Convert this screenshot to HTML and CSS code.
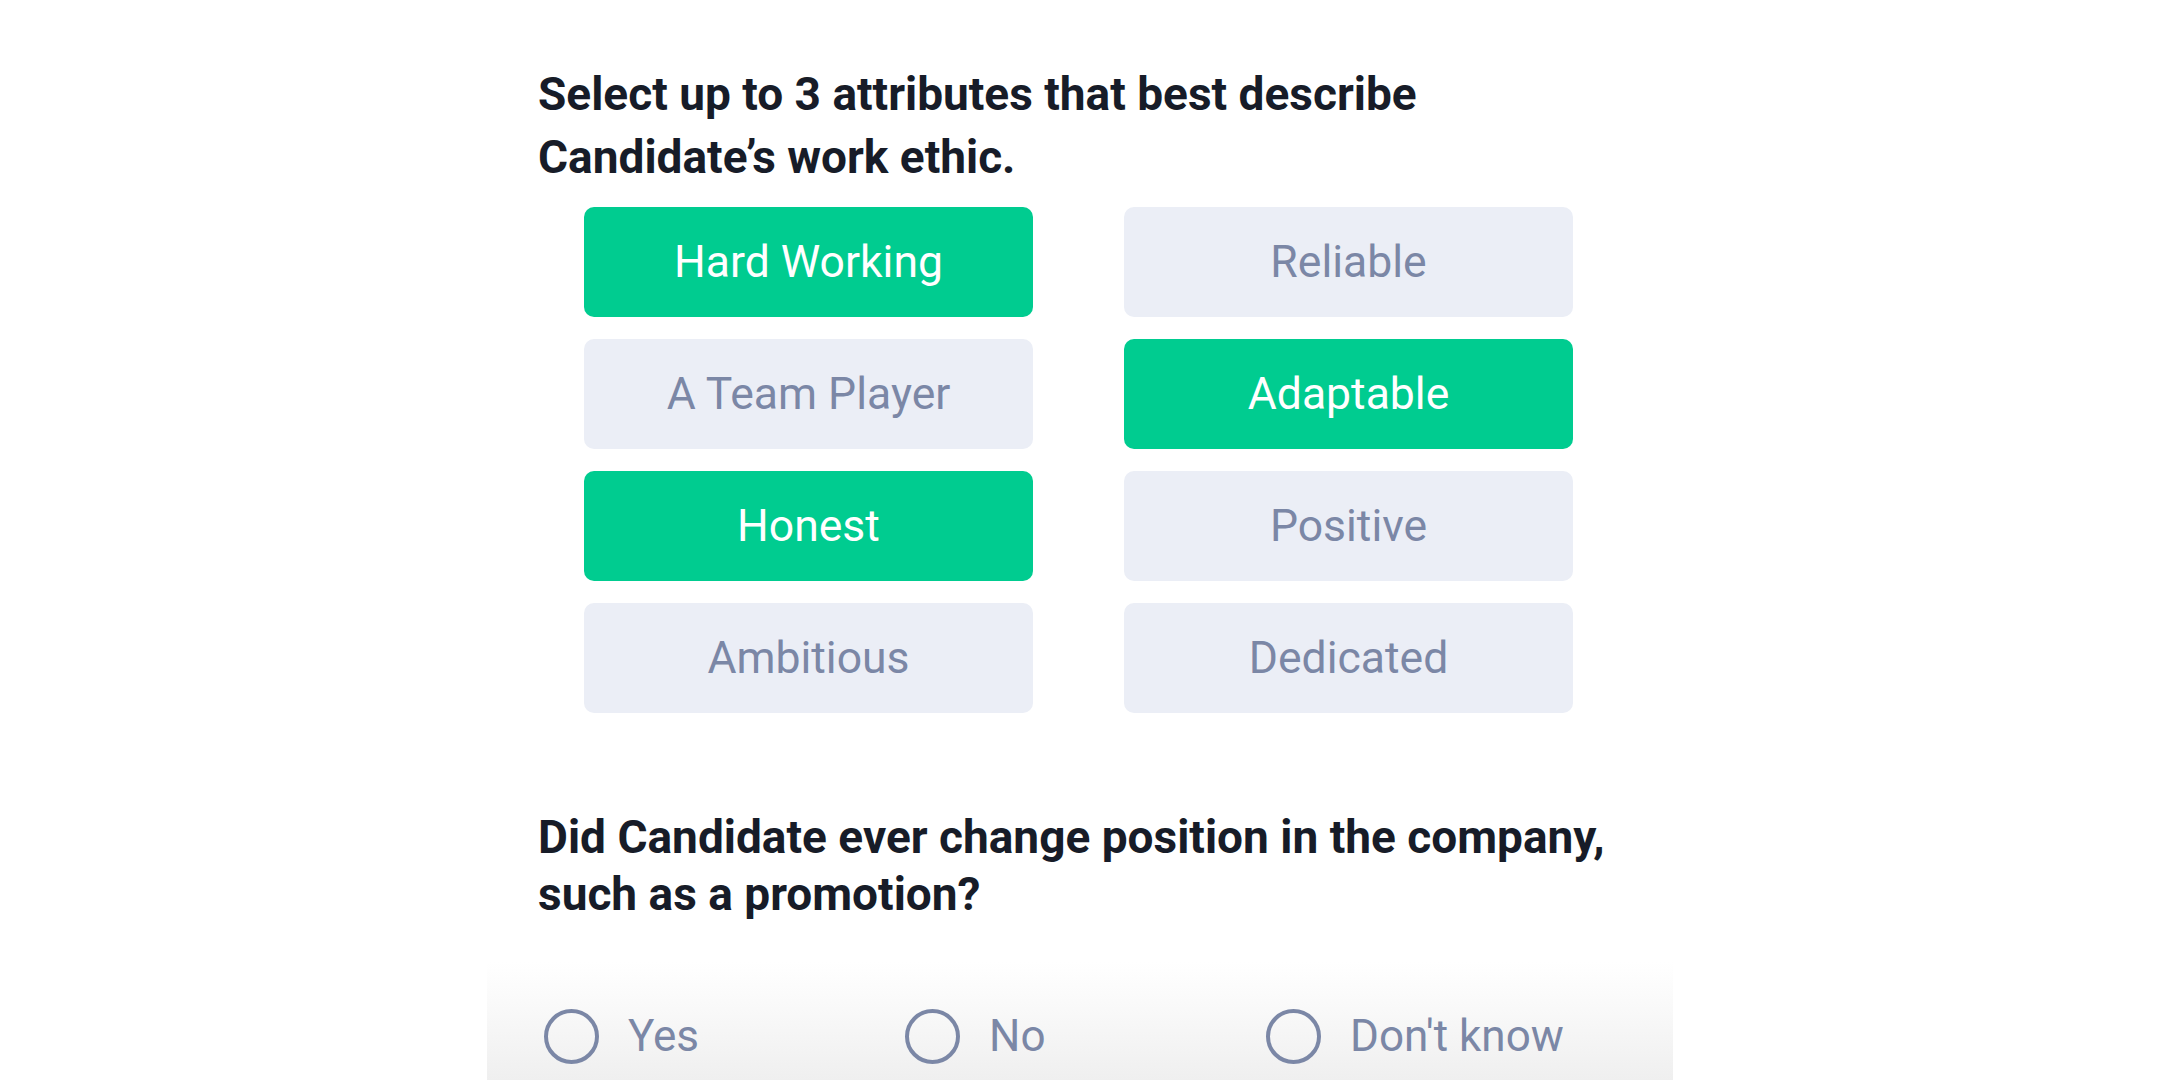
FILE: index.html
```html
<!DOCTYPE html>
<html lang="en">
<head>
<meta charset="utf-8">
<title>Reference questions</title>
<link rel="stylesheet" href="styles.css">
</head>
<body>
<main class="page">
  <section class="question q-attributes">
    <h2 class="q-title">Select up to 3 attributes that best describe<br>Candidate’s work ethic.</h2>
    <div class="choices">
      <button class="choice is-selected">Hard Working</button>
      <button class="choice">Reliable</button>
      <button class="choice">A Team Player</button>
      <button class="choice is-selected">Adaptable</button>
      <button class="choice is-selected">Honest</button>
      <button class="choice">Positive</button>
      <button class="choice">Ambitious</button>
      <button class="choice">Dedicated</button>
    </div>
  </section>
  <section class="question q-position">
    <h2 class="q-title q-title-tight">Did Candidate ever change position in the company,<br>such as a promotion?</h2>
  </section>
  <div class="radio-bar">
    <label class="radio"><span class="radio-dot"></span><span class="radio-label">Yes</span></label>
    <label class="radio"><span class="radio-dot"></span><span class="radio-label">No</span></label>
    <label class="radio"><span class="radio-dot"></span><span class="radio-label">Don't know</span></label>
  </div>
</main>
</body>
</html>
```

FILE: styles.css
```css
html, body {
  margin: 0;
  padding: 0;
  background: #ffffff;
  height: 1080px;
  overflow: hidden;
}

body {
  font-family: Roboto, "Noto Sans", "Liberation Sans", sans-serif;
  color: #171c28;
}

.page {
  width: 1186px;
  margin: 0 auto;
  display: flex;
  flex-direction: column;
}

.question {
  padding-left: 51px;
}

.q-attributes {
  padding-top: 63px;
}

.q-title {
  margin: 0;
  font-size: 46px;
  line-height: 63px;
  font-weight: 700;
  color: #171c28;
}

.q-title-tight {
  line-height: 57px;
}

.choices {
  width: 989px;
  margin: 18px 0 0 46px;
  display: grid;
  grid-template-columns: 449px 449px;
  column-gap: 91px;
  row-gap: 22px;
}

.choice {
  height: 110px;
  border: none;
  border-radius: 10px;
  background: #ebeef6;
  color: #7b87a6;
  font-family: inherit;
  font-size: 44.5px;
  font-weight: 400;
  padding: 0;
  cursor: pointer;
}

.choice.is-selected {
  background: #00cc90;
  color: #ffffff;
}

.q-position {
  margin-top: 96px;
}

.radio-bar {
  margin-top: 39px;
  height: 118px;
  padding-left: 57px;
  padding-top: 47px;
  display: flex;
  align-items: flex-start;
  background: linear-gradient(to bottom, #ffffff 0%, #f9f9f9 40%, #efefef 100%);
  box-sizing: border-box;
}

.radio {
  width: 361px;
  height: 55px;
  display: flex;
  align-items: center;
  gap: 29px;
}

.radio-dot {
  width: 55px;
  height: 55px;
  box-sizing: border-box;
  border: 4px solid #7b87a6;
  border-radius: 50%;
  flex: none;
}

.radio-label {
  font-size: 44px;
  line-height: 55px;
  color: #7b87a6;
}
```
